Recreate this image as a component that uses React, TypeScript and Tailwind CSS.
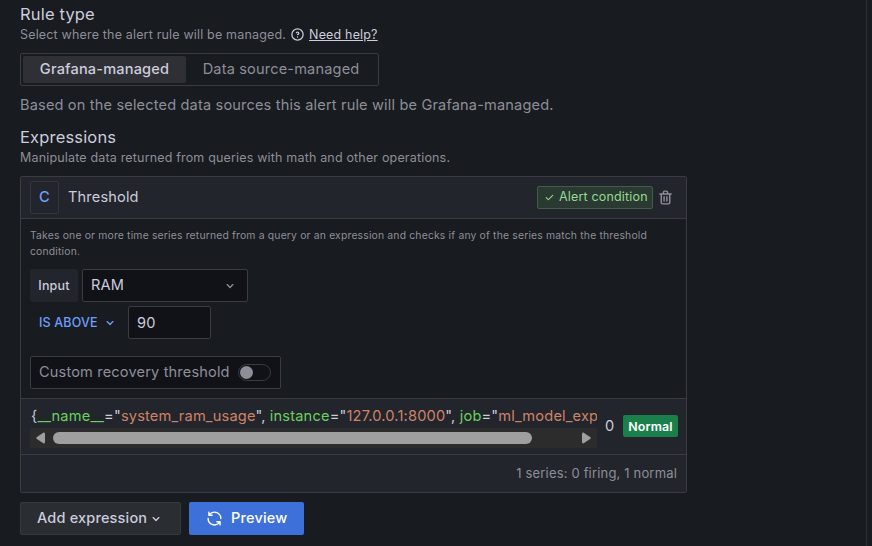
import type { ReactNode } from "react";

const ICONS = {
  angleDown:
    "M17,9.17a1,1,0,0,0-1.41,0L12,12.71,8.46,9.17a1,1,0,0,0-1.41,0,1,1,0,0,0,0,1.42l4.24,4.24a1,1,0,0,0,1.42,0L17,10.59A1,1,0,0,0,17,9.17Z",
  trash:
    "M10,18a1,1,0,0,0,1-1V11a1,1,0,0,0-2,0v6A1,1,0,0,0,10,18ZM20,6H16V5a3,3,0,0,0-3-3H11A3,3,0,0,0,8,5V6H4A1,1,0,0,0,4,8H5V19a3,3,0,0,0,3,3h8a3,3,0,0,0,3-3V8h1a1,1,0,0,0,0-2ZM10,5a1,1,0,0,1,1-1h2a1,1,0,0,1,1,1V6H10Zm7,14a1,1,0,0,1-1,1H8a1,1,0,0,1-1-1V8H17Zm-3-1a1,1,0,0,0,1-1V11a1,1,0,0,0-2,0v6A1,1,0,0,0,14,18Z",
  check:
    "M18.71,7.21a1,1,0,0,0-1.42,0L9.84,14.67,6.71,11.53A1,1,0,1,0,5.29,13l3.84,3.84a1,1,0,0,0,1.42,0l8.16-8.16A1,1,0,0,0,18.71,7.21Z",
  sync:
    "M19.91,15.51H15.38a1,1,0,0,0,0,2h2.4A8,8,0,0,1,4,12a1,1,0,1,0-2,0,10,10,0,0,0,16.88,7.23V21a1,1,0,0,0,2,0V16.5A1,1,0,0,0,19.91,15.51ZM12,2A10,10,0,0,0,5.12,4.77V3a1,1,0,0,0-2,0V7.5a1,1,0,0,0,1,1h4.5a1,1,0,0,0,0-2H6.22A8,8,0,0,1,20,12a1,1,0,0,0,2,0A10,10,0,0,0,12,2Z",
  question:
    "M11.29,15.29a1.58,1.58,0,0,0-.12.15.76.76,0,0,0-.09.18.64.64,0,0,0-.06.18,1.36,1.36,0,0,0,0,.2.84.84,0,0,0,.08.38.9.9,0,0,0,.54.54.94.94,0,0,0,.76,0,.9.9,0,0,0,.54-.54A1,1,0,0,0,13,16a1,1,0,0,0-.29-.71A1,1,0,0,0,11.29,15.29ZM12,2A10,10,0,1,0,22,12,10,10,0,0,0,12,2Zm0,18a8,8,0,1,1,8-8A8,8,0,0,1,12,20ZM12,7A3,3,0,0,0,9.4,8.5a1,1,0,1,0,1.73,1A1,1,0,0,1,12,9a1,1,0,0,1,0,2,1,1,0,1,0,0,2,3,3,0,0,0,0-6Z",
};

function Icon({ name, className }: { name: keyof typeof ICONS; className: string }) {
  return (
    <svg viewBox="0 0 24 24" fill="currentColor" className={`shrink-0 ${className}`}>
      <path d={ICONS[name]} />
    </svg>
  );
}

function Title({ children }: { children: ReactNode }) {
  return <h3 className="h-[22px] text-[16.5px] leading-[22px] text-[#ccccdc]">{children}</h3>;
}

function Label({ name, value }: { name: string; value: string }) {
  return (
    <>
      <span className="text-[#6ccf5f]">{name}</span>="<span className="text-[#ce8368]">{value}</span>
    </>
  );
}

export default function App() {
  return (
    <div className="flex h-[546px] w-[872px] overflow-hidden bg-[#181b1f] font-['Inter',sans-serif] tracking-[0.01071em] whitespace-nowrap">
      <main className="flex w-[867px] flex-col border-r border-[#2d2f34] pt-[3px] pl-5">
        <Title>Rule type</Title>
        <div className="flex h-[18px] items-center pt-px text-[12.5px] leading-[18px] text-[#8e8e99]">
          <span>Select where the alert rule will be managed.</span>
          <Icon name="question" className="ml-[4px] size-[15px] text-[#ccccdc]" />
          <a className="ml-1 text-[#ccccdc] underline">Need help?</a>
        </div>

        <div className="mt-[10px] flex h-[33px] w-[359px] rounded-[2px] border border-[#3a3c42] p-[2px] text-[14.56px] leading-[27px]">
          <div className="w-[163px] rounded-[2px] bg-[#2f3035] text-center font-medium text-[#ccccdc]">
            <span className="block h-[27px] leading-[26px]">Grafana-managed</span>
          </div>
          <div className="w-[190px] text-center leading-[26px] text-[#8e8e99]">Data source-managed</div>
        </div>

        <p className="mt-[8px] h-[22px] text-[14.56px] leading-[22px] text-[#8e8e99]">
          Based on the selected data sources this alert rule will be Grafana-managed.
        </p>

        <div className="mt-[10px]">
          <Title>Expressions</Title>
        </div>
        <p className="h-[18px] text-[12.5px] leading-[20px] text-[#8e8e99]">
          Manipulate data returned from queries with math and other operations.
        </p>

        <section className="mt-[10px] flex h-[317px] w-[667px] flex-col rounded-[2px] border border-[#3a3c42]">
          <header className="flex h-[42px] shrink-0 items-center border-b border-[#3a3c42] bg-[#22252b] pl-[9px]">
            <div className="flex h-[33px] w-[29px] items-center justify-center rounded-[2px] border border-[#34363c] pb-px text-[14.56px] leading-[21px] font-medium text-[#6e9fff]">C</div>
            <span className="ml-[9px] text-[14.56px] leading-[21px] text-[#ccccdc]">Threshold</span>
            <div className="ml-auto flex h-[23px] w-[116px] items-center rounded-[2px] border border-[#3f5f43] bg-[#2a3a33] pl-[5px] text-[12.5px] text-[#96d98d]">
              <Icon name="check" className="mr-[3px] size-[13px]" />
              <span>Alert condition</span>
            </div>
            <Icon name="trash" className="mr-[12px] ml-[4px] size-[17px] text-[#8e8e99]" />
          </header>

          <div className="flex h-[180px] shrink-0 flex-col border-b border-[#3a3c42] pt-[9px] pl-[9px]">
            <p className="text-[10.38px] leading-[16px] text-[#8e8e99]">
              Takes one or more time series returned from a query or an expression and checks if any of the series match the threshold
              <br />
              condition.
            </p>
            <div className="mt-[9px] flex gap-1">
              <div className="flex h-[33px] w-[48px] items-center justify-center rounded-[2px] bg-[#22252b] pt-px text-[12.5px] font-medium text-[#ccccdc]">Input</div>
              <div className="flex h-[33px] w-[166px] items-center justify-between rounded-[2px] border border-[#3a3c42] bg-[#111217] pr-[9px] pl-[8px] text-[14.56px] leading-[21px] text-[#ccccdc]">
                <span>RAM</span>
                <Icon name="angleDown" className="size-[16px] text-[#8e8e99]" />
              </div>
            </div>
            <div className="mt-[4px] flex">
              <div className="flex h-[33px] w-[98px] items-center pl-[9px] text-[12.5px] font-medium text-[#6e9fff]">
                <span className="pt-px">IS ABOVE</span>
                <Icon name="angleDown" className="ml-[4px] size-[16px]" />
              </div>
              <div className="flex h-[33px] w-[83px] items-center rounded-[2px] border border-[#3a3c42] bg-[#111217] pt-px pl-[8px] text-[14.56px] leading-[22px] text-[#ccccdc]">90</div>
            </div>
            <div className="mt-[17px] flex h-[33px] w-[251px] items-center rounded-[2px] border border-[#3a3c42] bg-[#111217] pl-[8px] text-[14.56px] leading-[21px] text-[#8e8e99]">
              <span>Custom recovery threshold</span>
              <div className="ml-auto mr-[9px] flex h-[17px] w-[33px] items-center rounded-full border border-[#3a3c42] pl-px">
                <div className="size-[13px] rounded-full bg-[#8e8e99]" />
              </div>
            </div>
          </div>

          <div className="flex h-[56px] shrink-0 items-center border-b border-[#3a3c42] bg-[#22252b] pl-[9px]">
            <div className="mt-px flex h-[41px] w-[567px] flex-col overflow-hidden">
              <div className="h-[21px] w-full shrink-0 overflow-hidden pl-px text-[14.62px] leading-[18px] text-[#ccccdc]">
                {"{"}
                <Label name="__name__" value="system_ram_usage" />
                ", <Label name="instance" value="127.0.0.1:8000" />
                ", <Label name="job" value="ml_model_exp" />
              </div>
              <div className="flex h-[20px] shrink-0 items-center bg-[#2c2c2c] text-[#9f9f9f]">
                <svg viewBox="0 0 10 12" className="ml-[6px] h-[12px] w-[9px]" fill="currentColor">
                  <path d="M8.5 0Q10 0 10 1.5V10.5Q10 12 8.5 12L.6 6.8Q0 6 .6 5.2Z" />
                </svg>
                <div className="ml-[8px] h-[12px] w-[479px] rounded-full bg-[#9f9f9f]" />
                <svg viewBox="0 0 10 12" className="ml-[50px] h-[12px] w-[9px]" fill="currentColor">
                  <path d="M1.5 0Q0 0 0 1.5V10.5Q0 12 1.5 12L9.4 6.8Q10 6 9.4 5.2Z" />
                </svg>
              </div>
            </div>
            <span className="ml-[8px] w-[18px] text-[14.56px] leading-[21px] text-[#ccccdc]">0</span>
            <div className="mb-px flex h-[22px] w-[55px] items-center justify-center rounded-[2px] bg-[#1a7f4b] pt-[2px] text-[12.4px] font-semibold text-white">Normal</div>
          </div>

          <footer className="flex flex-1 items-center justify-end bg-[#22252b] pr-[9px] text-[13px] text-[#8e8e99]">
            1 series: 0 firing, 1 normal
          </footer>
        </section>

        <div className="mt-[9px] flex gap-2 text-[14.5px] font-medium">
          <button className="flex h-[33px] w-[161px] items-center rounded-[2px] border border-[#36393f] bg-[#2a2d32] pl-[16px] text-[#ccccdc]">
            <span className="pb-[2px]">Add expression</span>
            <Icon name="angleDown" className="ml-px size-[16px]" />
          </button>
          <button className="flex h-[33px] w-[115px] items-center rounded-[2px] bg-[#3d71d9] pl-[17px] text-white">
            <Icon name="sync" className="mr-[8px] size-[17px]" />
            <span className="pb-[2px]">Preview</span>
          </button>
        </div>
      </main>
    </div>
  );
}
